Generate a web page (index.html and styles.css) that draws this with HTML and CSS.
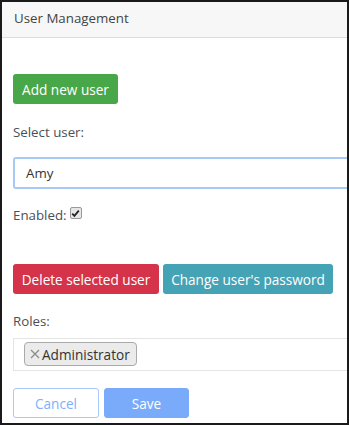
FILE: index.html
```html
<!DOCTYPE html>
<html lang="en">

<head>
  <meta charset="UTF-8">
  <meta name="viewport" content="width=device-width, initial-scale=1.0">
  <title>User Management</title>
  <link rel="stylesheet" href="styles.css">
</head>

<body>
  <div class="frame">
    <div class="panel-heading">User Management</div>

    <div class="panel-body">
      <div class="btn-row add-row">
        <button class="btn btn-success">Add new user</button>
      </div>

      <div class="label select-label">Select user:</div>
      <div class="user-input">Amy</div>

      <div class="label enabled-row">
        Enabled:
        <span class="checkbox">
          <svg width="9" height="9" viewBox="0 0 9 9">
            <path d="M1.2 4.6 L3.4 6.9 L7.8 1.6" fill="none" stroke="#222" stroke-width="1.7" />
          </svg>
        </span>
      </div>

      <div class="btn-row action-row">
        <button class="btn btn-danger">Delete selected user</button>
        <button class="btn btn-info">Change user's password</button>
      </div>

      <div class="label roles-label">Roles:</div>
      <div class="roles-box">
        <span class="tag">
          <svg class="tag-x" width="10" height="10" viewBox="0 0 10 10">
            <path d="M1 1 L9 9 M9 1 L1 9" stroke="#8a8a8a" stroke-width="1.2" />
          </svg>
          Administrator
        </span>
      </div>

      <div class="btn-row footer-row">
        <button class="btn btn-cancel">Cancel</button>
        <button class="btn btn-save">Save</button>
      </div>
    </div>
  </div>
</body>

</html>
```

FILE: styles.css
```css
html,
body {
  margin: 0;
  padding: 0;
  background-color: #fff;
}

body {
  font-family: "Open Sans", "Noto Sans", sans-serif;
  font-size: 13.3px;
  color: #495057;
}

.frame {
  box-sizing: border-box;
  width: 349px;
  height: 425px;
  border: 2px solid #1a1a1a;
  overflow: hidden;
}

.panel-heading {
  height: 35px;
  line-height: 33px;
  padding-left: 12px;
  background-color: #f7f7f7;
  border-bottom: 1px solid #dcdcdc;
  color: #444;
}

.panel-body {
  padding: 36px 0 0 11px;
}

.btn-row {
  display: flex;
  gap: 4px;
}

.btn {
  display: block;
  box-sizing: border-box;
  font-family: inherit;
  font-size: 13.6px;
  color: #fff;
  border: 1px solid transparent;
  border-radius: 3px;
  height: 30px;
  padding: 0;
  text-align: center;
  white-space: nowrap;
  cursor: pointer;
}

.btn-success {
  background-color: #48a748;
  width: 105px;
}

.label {
  color: #495057;
  line-height: 20px;
}

.select-label {
  margin-top: 18px;
}

.user-input {
  box-sizing: border-box;
  margin-top: 15px;
  width: 360px;
  height: 32px;
  line-height: 28px;
  padding-left: 11px;
  border: 2px solid #a8c8f8;
  border-radius: 3px;
  color: #333;
}

.enabled-row {
  margin-top: 16px;
  display: flex;
  align-items: center;
  gap: 3px;
  height: 20px;
}

.checkbox {
  box-sizing: border-box;
  width: 12px;
  height: 12px;
  border: 1px solid #999;
  border-radius: 2px;
  background-color: #e6e6e6;
  display: flex;
  align-items: center;
  justify-content: center;
  margin-top: -4px;
}

.action-row {
  margin-top: 39px;
}

.btn-danger {
  background-color: #d5334a;
  width: 146px;
}

.btn-info {
  background-color: #45a3b6;
  width: 170px;
}

.roles-label {
  margin-top: 17px;
}

.roles-box {
  box-sizing: border-box;
  margin-top: 7px;
  width: 360px;
  height: 33px;
  border: 1px solid #e4e4e4;
  padding: 3px 0 0 10px;
}

.tag {
  display: inline-flex;
  align-items: center;
  gap: 2px;
  box-sizing: border-box;
  height: 24px;
  width: 113px;
  padding: 0 0 0 5px;
  border: 1px solid #aaa;
  border-radius: 4px;
  background-color: #ebebeb;
  color: #333;
  font-size: 13.6px;
}

.footer-row {
  margin-top: 17px;
  gap: 5px;
}

.btn-cancel {
  width: 86px;
  background-color: #fff;
  color: #7eb0fb;
  border: 1px solid #a9c9fb;
}

.btn-save {
  width: 85px;
  background-color: #7aabfa;
  border-color: #7aabfa;
}
```
